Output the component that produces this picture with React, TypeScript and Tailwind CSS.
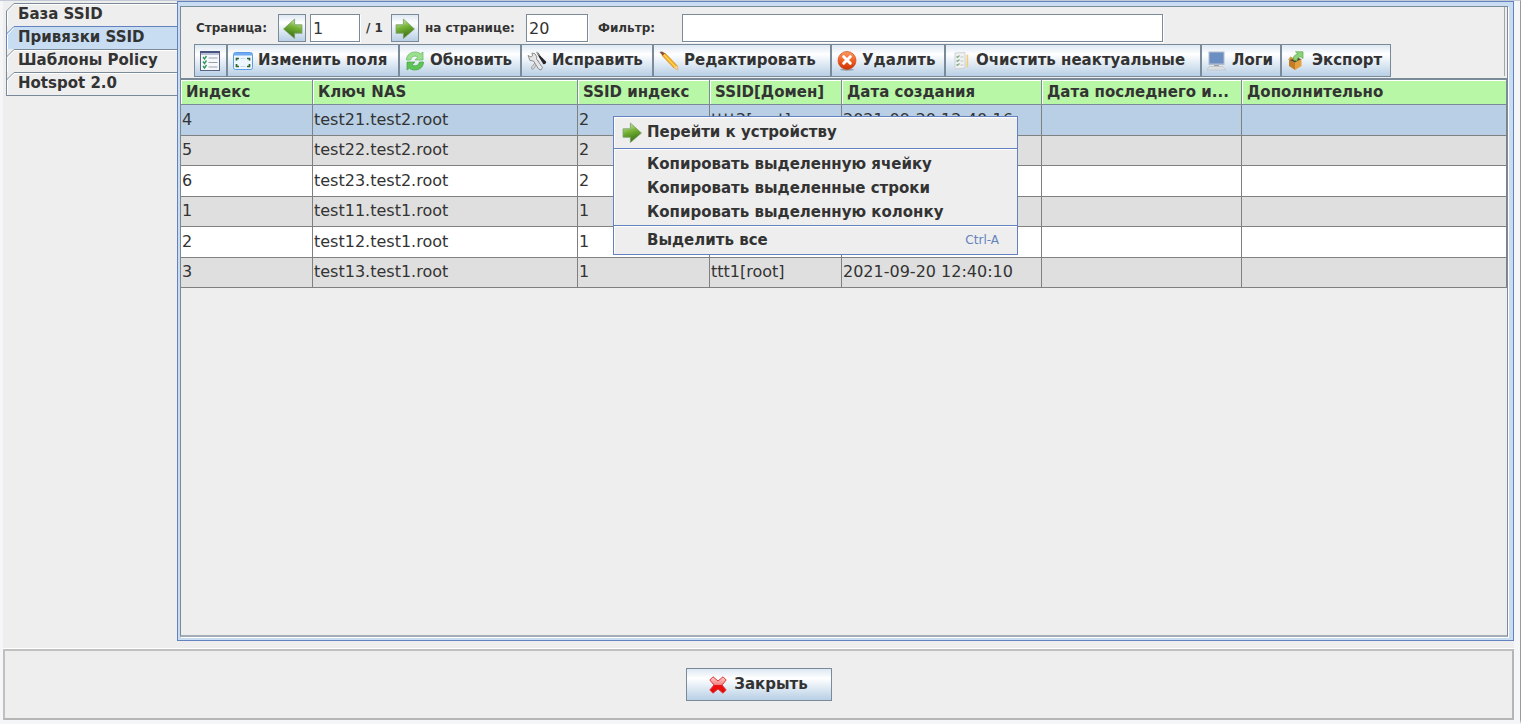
import React from "react";

interface IconProps {
  className?: string;
}

const ArrowIcon: React.FC<{ flip?: boolean }> = ({ flip }) => (
  <svg width="21" height="21" viewBox="0 0 20 20" className={flip ? "-scale-x-100" : ""} aria-hidden="true">
    <defs>
      <linearGradient id="arrowFill" x1="0" y1="0" x2="0.3" y2="1">
        <stop offset="0.1" stopColor="#c9ecaa" />
        <stop offset="0.5" stopColor="#76b236" />
        <stop offset="1" stopColor="#3a7214" />
      </linearGradient>
    </defs>
    <path d="M1 6.500h7V1l10.500 9.500L8 19.500v-5H1z" fill="url(#arrowFill)" stroke="#7c9f68" strokeWidth="0.8" />
  </svg>
);

const ListIcon = () => (
  <svg width="20" height="20" viewBox="0 0 20 20" aria-hidden="true">
    <rect x="0.5" y="0.5" width="19" height="19" fill="#f7f8fb" stroke="#5a6285" />
    <path d="M0 0h20v2H0z" fill="#4a5480" />
    <path d="M1 2h18v2H1z" fill="#b9c1d6" />
    <path d="M3 6l1.500 2L6.500 5M3 10.500l1.500 2L6.500 9.500M3 15l1.500 2L6.500 14" stroke="#2f9a5e" strokeWidth="1.400" fill="none" />
    <path d="M8.500 7h9M8.500 11.500h9M8.500 16h9" stroke="#9a9fae" strokeWidth="1.200" />
  </svg>
);

const FieldsIcon = () => (
  <svg width="20" height="18" viewBox="0 0 20 18" aria-hidden="true">
    <rect x="0.500" y="0.500" width="19" height="17" rx="2" fill="#eef6ff" stroke="#5b9be6" />
    <path d="M1 1h18v2.500H1z" fill="#6fabf0" />
    <path d="M3.500 8.500V6.500H6M14 6.500h2.500v2M3.500 12v2.500H6M14 14.500h2.500V12" stroke="#2e6230" strokeWidth="1.700" fill="none" />
    <path d="M7.500 6.500h5M7.500 14.500h5" stroke="#c9d9e8" />
  </svg>
);

const RefreshIcon = () => (
  <svg width="20" height="20" viewBox="0 0 20 20" aria-hidden="true">
    <path d="M1.500 9C1.500 3.500 6 .8 10.500 1c2.500 0 4 .8 5 1.800L18 1v8h-8l2.700-2.800C10 4 6.500 5.500 5.500 9z" fill="#9be08f" stroke="#63b45f" strokeWidth="0.7" />
    <path d="M18.500 11c0 5.500-4.500 8.200-9 8-2.500 0-4-.8-5-1.800L2 19v-8h8l-2.700 2.800C10 16 13.500 14.500 14.500 11z" fill="#5fc457" stroke="#44a544" strokeWidth="0.7" />
  </svg>
);

const ToolsIcon = () => (
  <svg width="20" height="20" viewBox="0 0 20 20" aria-hidden="true">
    <path d="M4 17l6-8 2 1.500-6 8z" fill="#d8d8d8" stroke="#8a8a8a" strokeWidth="0.7" />
    <path d="M1 4.500l3 1.500 1.500-1L5 2l3 .8 1.800 3L9.500 8l6 8.500-1.500 2.500-2.500-1L6.500 10 3 9.500z" fill="#e6e6e6" stroke="#858585" strokeWidth="0.9" />
    <path d="M10 2.500l1.500-.8 2 3.300 5.500 5.500c1 1.500-1.300 3.300-2.800 2.500L12.500 7z" fill="#262626" />
    <path d="M9.500 1l3 3.500" stroke="#999" strokeWidth="1.200" />
  </svg>
);

const PencilIcon = () => (
  <svg width="20" height="20" viewBox="0 0 20 20" aria-hidden="true">
    <path d="M3 4.500L6 2l12 12.500 1 4.500-4-2z" fill="#f5a81c" stroke="#cf8419" strokeWidth="0.6" />
    <path d="M5 3.700l11.500 12.300" stroke="#ffd95e" strokeWidth="1.300" />
    <path d="M14.800 17l3.200-2.500 1.200 4.700z" fill="#f0cfa0" />
    <path d="M0.500 1L3 .5l3 1.700-2.500 2.200z" fill="#8c4f3a" />
  </svg>
);

const DeleteIcon = () => (
  <svg width="20" height="20" viewBox="0 0 20 20" aria-hidden="true">
    <defs>
      <linearGradient id="deleteFill" x1="0" y1="0" x2="0" y2="1">
        <stop offset="0" stopColor="#ff9a62" />
        <stop offset="0.6" stopColor="#ee5418" />
        <stop offset="1" stopColor="#c43206" />
      </linearGradient>
    </defs>
    <ellipse cx="10" cy="18.700" rx="7" ry="1.200" fill="#9aa9b8" />
    <circle cx="10" cy="9.500" r="9" fill="url(#deleteFill)" stroke="#c94a17" strokeWidth="0.7" />
    <path d="M6.700 5.700l6.600 6.600M13.300 5.700l-6.600 6.600" stroke="#fff" strokeWidth="3" strokeLinecap="round" />
  </svg>
);

const CleanIcon = () => (
  <svg width="20" height="20" viewBox="0 0 20 20" aria-hidden="true">
    <path d="M4 2L14 1.500v15.500L4 18z" fill="#f0f1f1" stroke="#c6cacd" strokeWidth="0.8" />
    <path d="M5.500 5.500l1 1 2-2M5.500 9.500l1 1 2-2M5.500 13.500l1 1 2-2" stroke="#84ad8e" strokeWidth="1.200" fill="none" />
    <path d="M9.500 6h3M9.500 10h3M9.500 14h3" stroke="#c3c6c8" />
    <path d="M15.500 3.500h1.700V15l-.8 2-.9-2z" fill="#f0cd7d" />
  </svg>
);

const LogsIcon = () => (
  <svg width="20" height="20" viewBox="0 0 20 20" aria-hidden="true">
    <path d="M1.500 0.500h16v13.500h-16z" fill="#b3bdca" />
    <path d="M2.500 1.500h14v11h-14z" fill="#6b8fc2" />
    <path d="M7 14h5v1.500H7z" fill="#9aa1a9" />
    <path d="M2 15.500h14l3 3.500H0z" fill="#dcdfe2" stroke="#b8bcc0" strokeWidth="0.6" />
  </svg>
);

const ExportIcon = () => (
  <svg width="20" height="20" viewBox="0 0 20 20" aria-hidden="true">
    <path d="M2 9l6 2.500V19l-6-4z" fill="#c27d26" />
    <path d="M8 11.500L14.500 8v7L8 19z" fill="#e2a13c" />
    <path d="M2 9l6-3 6.500 2L8 11.500z" fill="#5d4218" />
    <path d="M1 9l2.500-3.500L8 8" fill="#d8933a" />
    <path d="M6.500 9C6 5 8 3.500 11 3.200L8.500.8H16V7.500l-2.200-1.700C11.500 6 10 7 10 10z" fill="#8bd279" stroke="#56a74f" strokeWidth="0.7" />
  </svg>
);

const CrossIcon: React.FC<IconProps> = ({ className }) => (
  <svg width="18" height="18" viewBox="0 0 18 18" className={className} aria-hidden="true">
    <defs>
      <linearGradient id="crossFill" x1="0" y1="0" x2="0" y2="1">
        <stop offset="0.1" stopColor="#ffc0c0" />
        <stop offset="0.48" stopColor="#f58080" />
        <stop offset="0.52" stopColor="#ee1010" />
        <stop offset="1" stopColor="#e00c0c" />
      </linearGradient>
    </defs>
    <path
      d="M4 .8L9 5 14 .8 17.200 4 13 9l4.200 5L14 17.200 9 13 4 17.200.8 14 5 9 .8 4z"
      fill="url(#crossFill)"
      stroke="#e03838"
      strokeWidth="1"
      strokeLinejoin="round"
    />
  </svg>
);

interface TabProps {
  label: string;
  active?: boolean;
  first?: boolean;
}

const Tab: React.FC<TabProps> = ({ label, active, first }) => (
  <button role="tab" aria-selected={!!active} className="flex h-[23px] w-full text-left">
    <svg width="8" height="23" viewBox="0 0 8 23" className="shrink-0" aria-hidden="true">
      <path d="M8 .5L.5 8V23H8z" fill={active ? "#c8ddf2" : "#eeeeee"} />
      {!first && <path d="M.5 0v8" stroke="#7a8a99" />}
      <path d="M8 .5L.5 8V23" fill="none" stroke={active ? "#6382bf" : "#7a8a99"} />
      <path d="M8 1.800L1.500 8.400V23" fill="none" stroke="#ffffff" />
    </svg>
    <span
      className={
        active
          ? "flex-1 border-t border-[#6382bf] bg-[#c8ddf2] pl-1 leading-[21px]"
          : "flex-1 border-t border-[#7a8a99] pl-1 leading-[21px] shadow-[inset_0_1px_0_#fff]"
      }
    >
      {label}
    </span>
  </button>
);

const metal = "border border-[#7a8a99] bg-linear-to-b from-[#dde8f3] via-white via-30% to-[#b8cfe5]";
const field = "h-7 border border-[#7a8a99] bg-white px-[2px] text-[16px] font-normal shadow-[1px_1px_0_#fff]";

const actions = [
  { label: "", icon: <ListIcon />, width: "w-[33px]" },
  { label: "Изменить поля", icon: <FieldsIcon />, width: "w-[172px]" },
  { label: "Обновить", icon: <RefreshIcon />, width: "w-[122px]" },
  { label: "Исправить", icon: <ToolsIcon />, width: "w-[132px]" },
  { label: "Редактировать", icon: <PencilIcon />, width: "w-[178px]" },
  { label: "Удалить", icon: <DeleteIcon />, width: "w-[114px]" },
  { label: "Очистить неактуальные", icon: <CleanIcon />, width: "w-[256px]" },
  { label: "Логи", icon: <LogsIcon />, width: "w-[80px]" },
  { label: "Экспорт", icon: <ExportIcon />, width: "w-[110px]" },
];

const columns = [
  { title: "Индекс", width: "w-[132px]" },
  { title: "Ключ NAS", width: "w-[265px]" },
  { title: "SSID индекс", width: "w-[132px]" },
  { title: "SSID[Домен]", width: "w-[132px]" },
  { title: "Дата создания", width: "w-[200px]" },
  { title: "Дата последнего и...", width: "w-[200px]" },
  { title: "Дополнительно", width: "" },
];

const rows = [
  ["4", "test21.test2.root", "2", "tttt2[root]", "2021-09-20 12:40:16", "", ""],
  ["5", "test22.test2.root", "2", "", "", "", ""],
  ["6", "test23.test2.root", "2", "", "", "", ""],
  ["1", "test11.test1.root", "1", "", "", "", ""],
  ["2", "test12.test1.root", "1", "", "", "", ""],
  ["3", "test13.test1.root", "1", "ttt1[root]", "2021-09-20 12:40:10", "", ""],
];

const rowColor = (index: number) => {
  if (index === 0) return "bg-[#b8cfe5]";
  return index % 2 ? "bg-[#dfdfdf]" : "bg-white";
};

const Toolbar = () => (
  <div className="h-[73px] border-b-2 border-[#7a8a99] pb-[2px] shadow-[0_1px_0_#fff]">
    <div className="mr-[2px] flex h-[69px] flex-col border-r border-[#a5a5a5] pl-[13px] pt-[7px]">
      <div className="flex items-center text-[12px]">
        <span className="w-[84px] pl-[2px]">Страница:</span>
        <button aria-label="Предыдущая страница" className={`flex h-7 w-7 items-center justify-center ${metal}`}>
          <ArrowIcon flip />
        </button>
        <input aria-label="Номер страницы" defaultValue="1" className={`ml-1 w-[50px] ${field}`} />
        <span className="w-[31px] pl-[6px] whitespace-nowrap">/ 1</span>
        <button aria-label="Следующая страница" className={`flex h-7 w-7 items-center justify-center ${metal}`}>
          <ArrowIcon />
        </button>
        <label htmlFor="perPage" className="w-[107px] pl-[6px] whitespace-nowrap">на странице:</label>
        <input id="perPage" defaultValue="20" className={`w-[62px] ${field}`} />
        <label htmlFor="filter" className="w-[94px] pl-[10px]">Фильтр:</label>
        <input id="filter" className={`w-[481px] ${field}`} />
      </div>
      <div className="mt-[2px] flex">
        {actions.map(({ label, icon, width }) => (
          <button
            key={label}
            aria-label={label || "Список"}
            className={`flex h-[33px] shrink-0 items-center gap-[5px] pl-[5px] whitespace-nowrap ${width} ${metal}`}
          >
            {icon}
            {label && <span>{label}</span>}
          </button>
        ))}
      </div>
    </div>
  </div>
);

const ContextMenu = () => (
  <div role="menu" className="absolute top-[36px] left-[432px] w-[405px] border border-[#6382bf] bg-[#eeeeee] shadow-[inset_1px_1px_0_#fff]">
    <button role="menuitem" className="flex h-8 w-full items-center gap-1 border-b border-[#6382bf] pl-2">
      <ArrowIcon />
      Перейти к устройству
    </button>
    <div className="flex flex-col border-b border-[#6382bf] pt-[3px] pb-px pl-[33px] shadow-[inset_0_1px_0_#fff]">
      <button role="menuitem" className="h-[24px] text-left">Копировать выделенную ячейку</button>
      <button role="menuitem" className="h-[24px] text-left">Копировать выделенные строки</button>
      <button role="menuitem" className="h-[24px] text-left">Копировать выделенную колонку</button>
    </div>
    <button role="menuitem" className="flex h-[28px] w-full items-center justify-between pr-[18px] pl-[33px] shadow-[inset_0_1px_0_#fff]">
      Выделить все
      <span className="text-[12px] font-normal text-[#6382bf]">Ctrl-A</span>
    </button>
  </div>
);

const BindingsTable = () => (
  <table className="w-full table-fixed border-separate border-spacing-0">
    <thead>
      <tr className="h-[25px]">
        {columns.map(({ title, width }) => (
          <th
            key={title}
            className={`border-r border-b border-[#7a8a99] bg-[#b8f7a5] pl-[5px] text-left leading-6 whitespace-nowrap shadow-[inset_1px_1px_0_#fff] ${width}`}
          >
            {title}
          </th>
        ))}
      </tr>
    </thead>
    <tbody className="text-[16px] font-normal">
      {rows.map((row, index) => (
        <tr key={row[0]} className={`h-[30px] odd:h-[31px] ${rowColor(index)}`}>
          {row.map((cell, i) => (
            <td key={i} className="border-r border-b border-[#808080] pb-px pl-px leading-6 whitespace-nowrap">
              {cell}
            </td>
          ))}
        </tr>
      ))}
    </tbody>
  </table>
);

const App: React.FC = () => {
  return (
    <div className="flex min-h-screen flex-col border-t border-r border-b-4 border-t-[#c3cad6] border-r-[#9a9a9a] border-b-[#f5f6f7] bg-[#eeeeee] font-['DejaVu_Sans',sans-serif] text-[15px] font-bold text-[#333333]">
      <div className="flex flex-1 flex-col border-r-[6px] border-l-[3px] border-[#f4f6f8]">
        <div className="flex flex-1 pl-[3px]">
          <nav role="tablist" className="w-[171px] shrink-0 pt-[2px]">
            <Tab label="База SSID" first />
            <Tab label="Привязки SSID" active />
            <Tab label="Шаблоны Policy" />
            <Tab label="Hotspot 2.0" />
            <div className="border-t border-[#7a8a99]" />
          </nav>
          <main className="flex min-w-0 flex-1 border border-[#6382bf] bg-[#c8ddf2] pt-1 pr-[5px] pb-[3px] pl-[2px]">
            <div className="flex min-w-0 flex-1 flex-col border border-b-2 border-[#7a8a99] border-b-[#a3adb7] bg-[#eeeeee] shadow-[1px_1px_0_#fff]">
              <Toolbar />
              <div className="relative">
                <BindingsTable />
                <ContextMenu />
              </div>
            </div>
          </main>
        </div>
        <footer className="mt-[8px] flex h-[71px] items-center justify-center border-2 border-t-[#c0c0c0] border-r-[#b5b5b5] border-b-[#b5b5b5] border-l-[#c0c0c0] shadow-[0_-1px_0_#fff]">
          <button className={`flex h-[33px] w-[146px] items-center justify-center gap-[7px] ${metal}`}>
            <CrossIcon />
            Закрыть
          </button>
        </footer>
      </div>
    </div>
  );
};

export default App;
